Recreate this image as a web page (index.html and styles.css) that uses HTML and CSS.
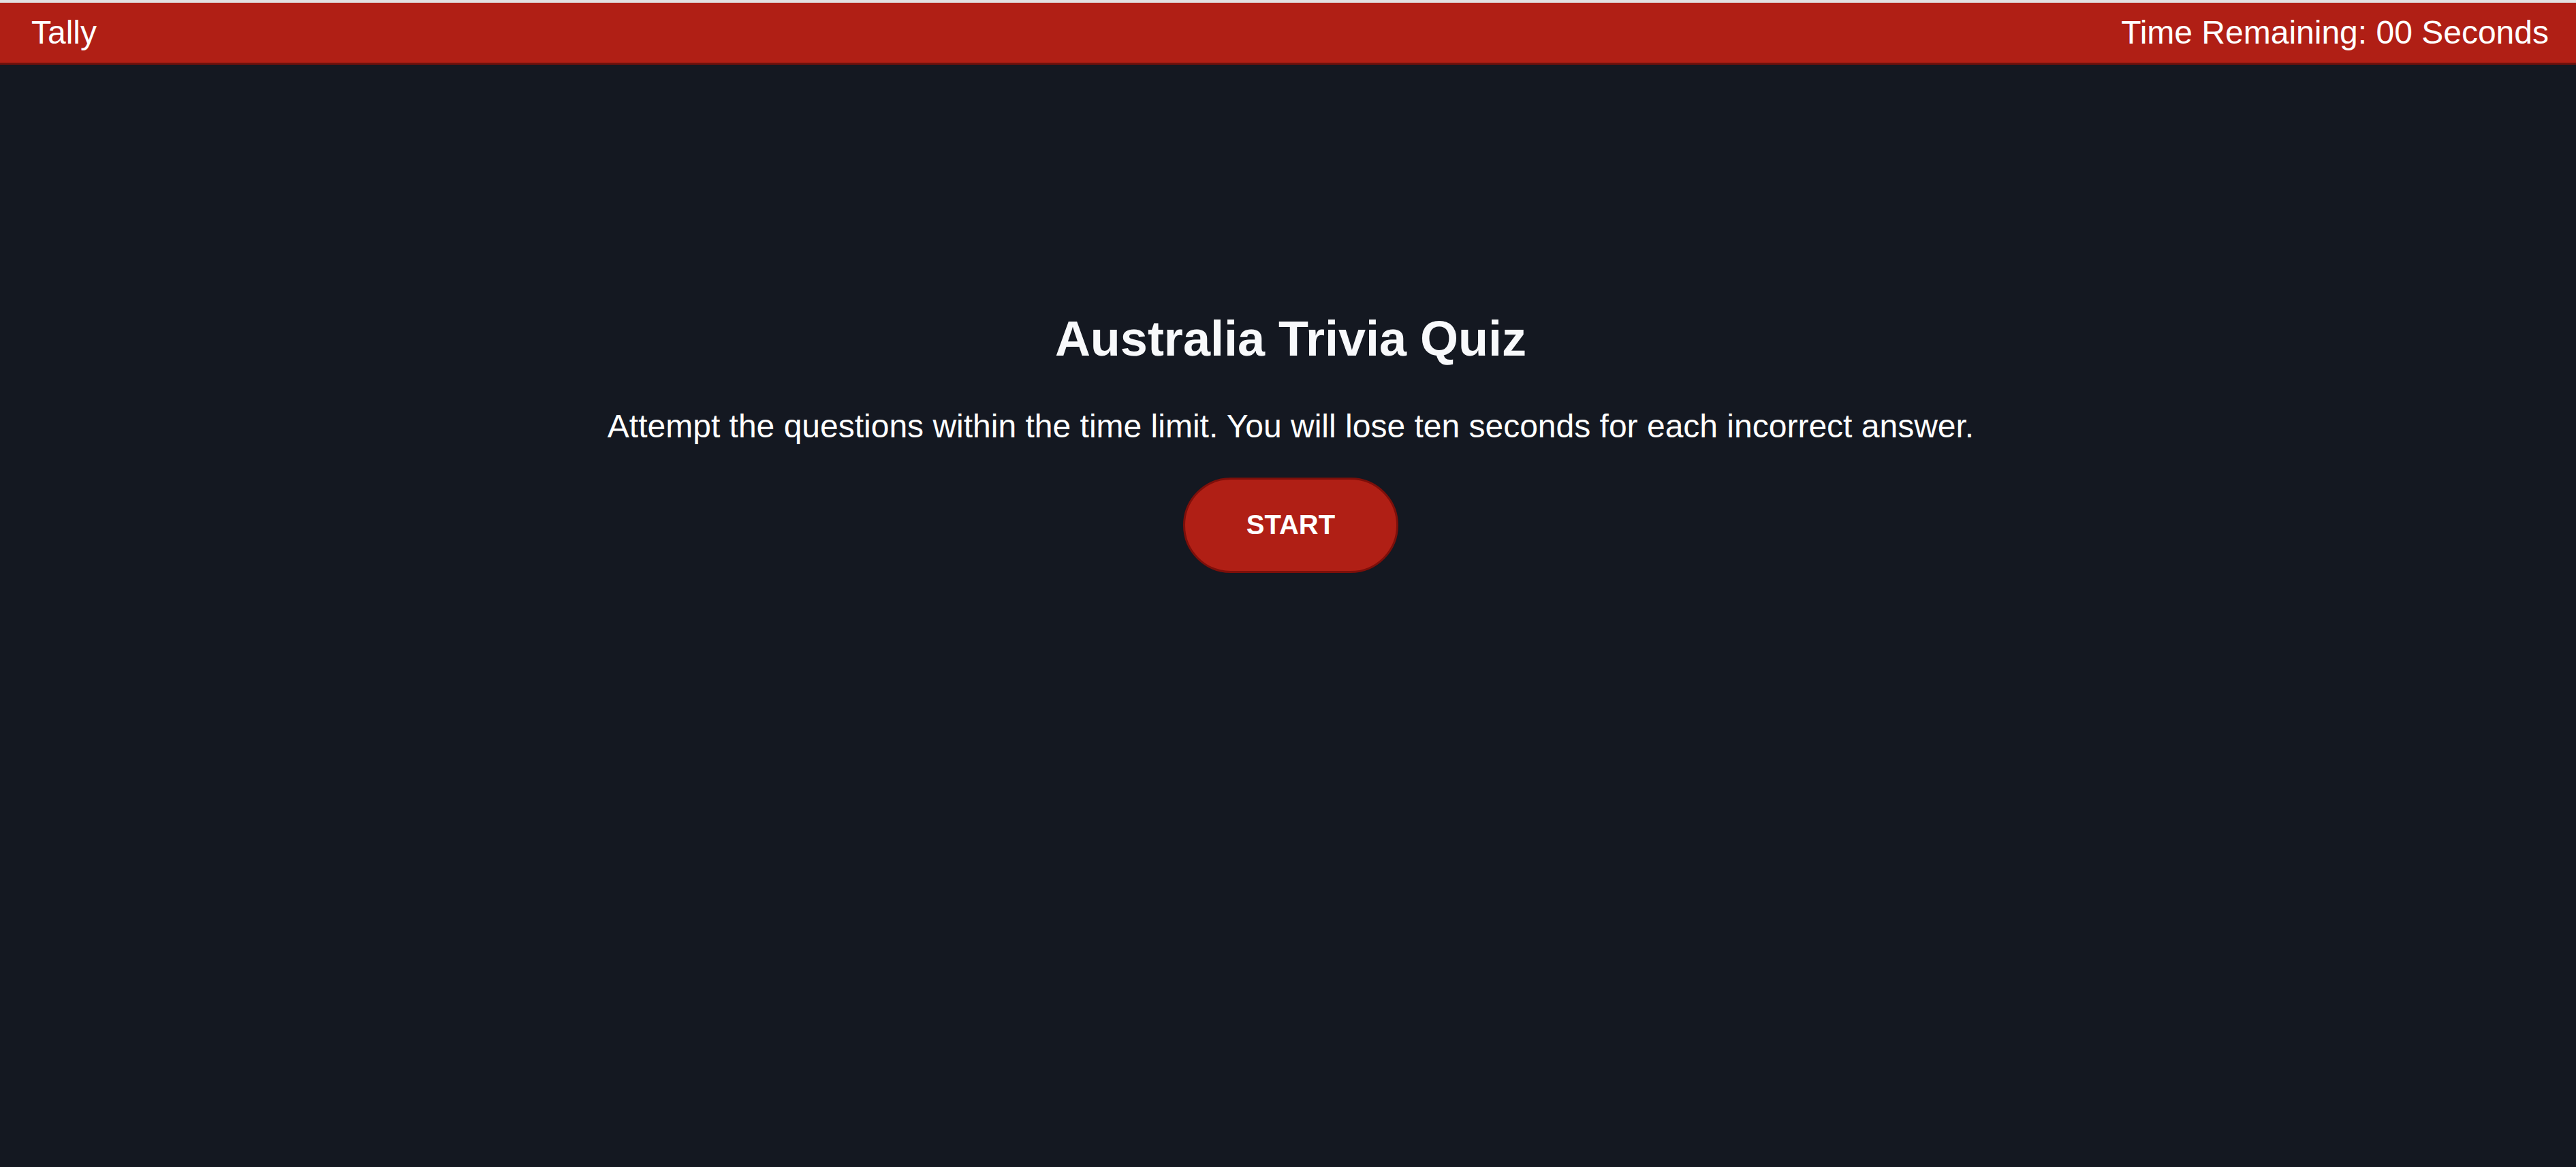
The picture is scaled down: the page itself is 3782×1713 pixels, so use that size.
FILE: index.html
```html
<!DOCTYPE html>
<html lang="en">
<head>
<meta charset="utf-8">
<title>Australia Trivia Quiz</title>
<link rel="stylesheet" href="styles.css">
</head>
<body>
<header class="topbar">
  <span class="tally">Tally</span>
  <span class="timer">Time Remaining: 00 Seconds</span>
</header>
<main class="intro">
  <h1 class="title">Australia Trivia Quiz</h1>
  <p class="lead">Attempt the questions within the time limit. You will lose ten seconds for each incorrect answer.</p>
  <button class="start-btn" type="button">START</button>
</main>
</body>
</html>
```

FILE: styles.css
```css
html, body {
  margin: 0;
  padding: 0;
}

body {
  min-height: 100vh;
  background: #141821;
  font-family: "Liberation Sans", Arial, sans-serif;
  color: #ffffff;
}

.topbar {
  display: flex;
  justify-content: space-between;
  align-items: center;
  height: 88px;
  padding: 0 40px 0 46px;
  background: #b01f15;
  border-top: 4px solid #e2e2e2;
  border-bottom: 3px solid #6e110c;
  font-size: 48px;
  line-height: 1;
}

.intro {
  display: flex;
  flex-direction: column;
  align-items: center;
  padding-top: 361px;
  padding-left: 8px;
}

.title {
  margin: 0;
  font-size: 72px;
  line-height: 1.15;
  font-weight: bold;
  color: #f8f9fb;
}

.lead {
  margin: 59px 0 0;
  font-size: 48px;
  line-height: 1.15;
}

.start-btn {
  margin-top: 48px;
  width: 316px;
  height: 140px;
  border: 3px solid #7d0f0a;
  border-radius: 70px;
  background: #b01f15;
  color: #ffffff;
  font-family: "Liberation Sans", Arial, sans-serif;
  font-size: 40px;
  font-weight: bold;
  cursor: pointer;
}
```
